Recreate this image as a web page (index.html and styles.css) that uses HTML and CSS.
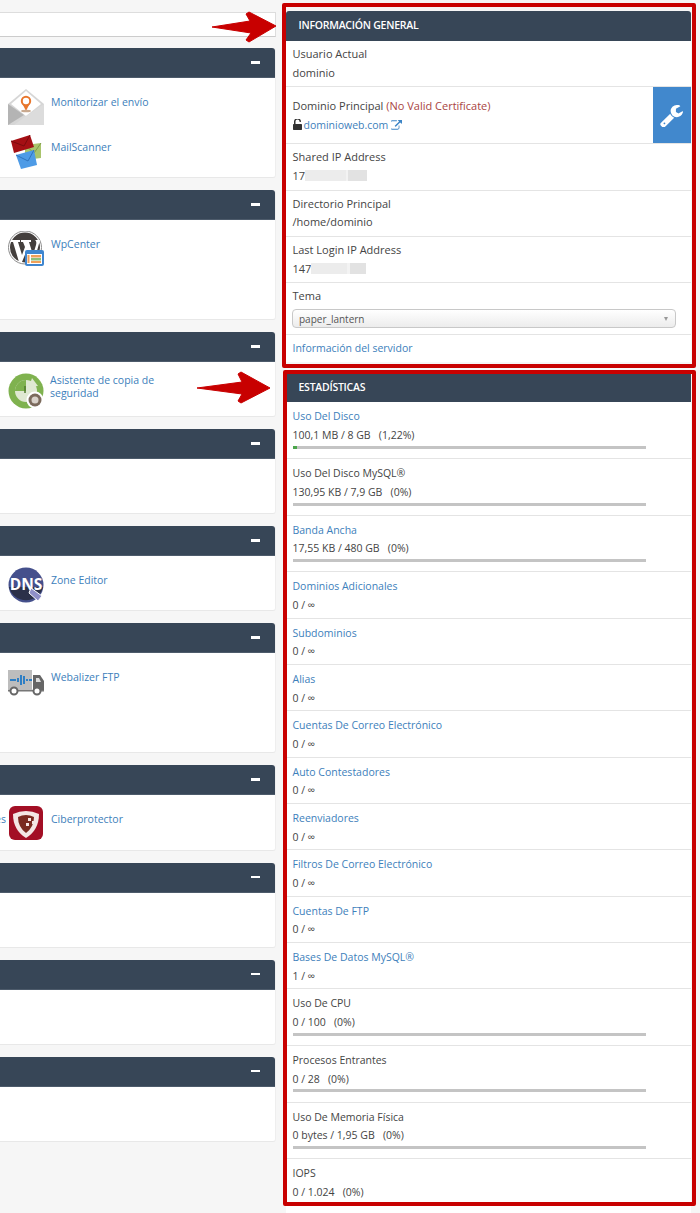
FILE: index.html
```html
<!DOCTYPE html>
<html lang="es">
<head>
  <meta charset="UTF-8">
  <meta name="viewport" content="width=device-width, initial-scale=1.0">
  <title>cPanel</title>
  <link rel="stylesheet" href="styles.css">
</head>
<body>
  <div class="page">
    <!-- Left column: tool groups -->
    <div class="tools">
      <div class="search-box"></div>

      <div class="group">
        <div class="group-head"><span class="collapse"></span></div>
        <div class="group-body size-big">
          <a class="tool">
            <svg class="tool-icon" viewBox="0 0 36 36">
              <path d="M18 0 36 15V36H0V15Z" fill="#d6d6d6"/>
              <path d="M18 2 33 15 18 27 3 15Z" fill="#fff"/>
              <path d="M0 15 16 26 0 36Z" fill="#b4b4b4"/>
              <path d="M36 15V36H6L18 27Z" fill="#dcdcdc"/>
              <circle cx="18" cy="12" r="4.2" fill="none" stroke="#e8762c" stroke-width="2"/>
              <path d="M15 16h6l-3 6Z" fill="#e8762c"/>
              <ellipse cx="18" cy="22" rx="5" ry="1.3" fill="#c9a98f"/>
            </svg>
            <span class="tool-name">Monitorizar el envío</span>
          </a>
          <a class="tool">
            <svg class="tool-icon" viewBox="0 0 36 36">
              <path d="M17 11 33 9V24L17 26Z" fill="#a9c46c"/>
              <path d="M17 11 26 19 33 9" fill="none" stroke="#7f9c49" stroke-width="1"/>
              <path d="M3 7 22 1 26 13 6 19Z" fill="#a50f14"/>
              <path d="M3 7 16 12 22 1" fill="none" stroke="#7c0a0d" stroke-width="1"/>
              <path d="M8 21 26 16 29 31 13 35Z" fill="#4e9be6"/>
              <path d="M8 21 20 27 26 16" fill="none" stroke="#2f74bd" stroke-width="1"/>
            </svg>
            <span class="tool-name">MailScanner</span>
          </a>
        </div>
      </div>

      <div class="group">
        <div class="group-head"><span class="collapse"></span></div>
        <div class="group-body size-big">
          <a class="tool">
            <svg class="tool-icon" viewBox="0 0 36 36">
              <circle cx="17" cy="16.5" r="16.5" fill="#fff" stroke="#8c8c8c" stroke-width="1"/>
              <circle cx="17" cy="16.5" r="15" fill="#443f3d"/>
              <path d="M3 9H12V11H10L14 24 17 16 15 11H13V9H23V11H21L25 24 28 14Q29 10 27 9H32L26 31H23L18.500 20 14 31H11L5 11H3Z" fill="#fff"/>
              <rect x="17" y="19" width="19" height="16" rx="2" fill="#3f86cf"/>
              <rect x="19" y="23" width="15" height="10" fill="#fff"/>
              <rect x="23" y="24" width="10" height="2.500" fill="#f0a05a"/>
              <rect x="23" y="27" width="10" height="2.500" fill="#8cc07c"/>
              <rect x="23" y="30" width="10" height="2" fill="#f0a05a"/>
              <rect x="19.500" y="24" width="2" height="8" fill="#f0a05a"/>
            </svg>
            <span class="tool-name">WpCenter</span>
          </a>
        </div>
      </div>

      <div class="group">
        <div class="group-head"><span class="collapse"></span></div>
        <div class="group-body size-small">
          <a class="tool tool-wide">
            <svg class="tool-icon" viewBox="0 0 36 36">
              <circle cx="18" cy="18" r="17.500" fill="#7fb24f"/>
              <circle cx="18" cy="18" r="11" fill="#dfe8d2"/>
              <path d="M18 18V7A11 11 0 0 0 7 18Z" fill="#7fb24f"/>
              <path d="M24 5 30 13 21 14Z" fill="#dfe8d2"/>
              <path d="M17 13V20" stroke="#4f7a2c" stroke-width="1.500"/>
              <circle cx="27" cy="27" r="8.500" fill="#fff"/>
              <circle cx="27" cy="27" r="6.500" fill="#7b6a5c"/>
              <circle cx="27" cy="27" r="3.500" fill="#d9d2ca"/>
            </svg>
            <span class="tool-name">Asistente de copia de seguridad</span>
          </a>
        </div>
      </div>

      <div class="group">
        <div class="group-head"><span class="collapse"></span></div>
        <div class="group-body size-small"></div>
      </div>

      <div class="group">
        <div class="group-head"><span class="collapse"></span></div>
        <div class="group-body size-small">
          <a class="tool">
            <svg class="tool-icon" viewBox="0 0 36 36">
              <circle cx="18" cy="18" r="17.500" fill="#45508c"/>
              <path d="M1 20H35A17.500 17.500 0 0 1 1 20Z" fill="#2b3049"/>
              <text class="dns-label" x="18" y="23">DNS</text>
              <path d="M23 21 34 29 30 34 21 26Z" fill="#8f8fc8" stroke="#fff" stroke-width="1"/>
            </svg>
            <span class="tool-name">Zone Editor</span>
          </a>
        </div>
      </div>

      <div class="group">
        <div class="group-head"><span class="collapse"></span></div>
        <div class="group-body size-big">
          <a class="tool">
            <svg class="tool-icon" viewBox="0 0 36 36">
              <rect x="0" y="6" width="24" height="20" fill="#bdbdbd"/>
              <path d="M2 16H8M10 14V18M13 11V21M16 12V20M19 15V17M21 16H24" stroke="#2f7fc4" stroke-width="2"/>
              <path d="M25 11H32L36 17V27H25Z" fill="#666"/>
              <path d="M28 14H31L33 18H28Z" fill="#ddd"/>
              <rect x="0" y="26" width="36" height="1.500" fill="#777"/>
              <circle cx="6" cy="27" r="3.500" fill="#fff" stroke="#666" stroke-width="2"/>
              <circle cx="29" cy="27" r="3.500" fill="#fff" stroke="#666" stroke-width="2"/>
            </svg>
            <span class="tool-name">Webalizer FTP</span>
          </a>
        </div>
      </div>

      <div class="group">
        <div class="group-head"><span class="collapse"></span></div>
        <div class="group-body size-small">
          <a class="tool tool-cut">
            <span class="cut-name">es</span>
            <svg class="tool-icon" viewBox="0 0 36 36">
              <rect x="1" y="0" width="34" height="34" rx="6" fill="#a30f25"/>
              <path d="M5 8Q18 2 31 8 31 24 18 32 5 24 5 8Z" fill="#f4e6e4"/>
              <path d="M10 11Q18 7 26 11 26 21 18 27 10 21 10 11Z" fill="#7a2a20"/>
              <rect x="20" y="12" width="3" height="3" fill="#f4e6e4"/>
              <rect x="24" y="15" width="3" height="3" fill="#f4e6e4"/>
              <rect x="18" y="17" width="3" height="3" fill="#f4e6e4"/>
            </svg>
            <span class="tool-name">Ciberprotector</span>
          </a>
        </div>
      </div>

      <div class="group">
        <div class="group-head"><span class="collapse"></span></div>
        <div class="group-body size-small"></div>
      </div>

      <div class="group">
        <div class="group-head"><span class="collapse"></span></div>
        <div class="group-body size-small"></div>
      </div>

      <div class="group">
        <div class="group-head"><span class="collapse"></span></div>
        <div class="group-body size-small"></div>
      </div>
    </div>

    <!-- Right column: account info and stats -->
    <div class="sidebar">
      <div class="panel panel-general">
        <div class="panel-head">INFORMACIÓN GENERAL</div>
        <div class="row">
          <div class="label">Usuario Actual</div>
          <div class="value">dominio</div>
        </div>
        <div class="row row-domain">
          <div class="domain-text">
            <div class="label">Dominio Principal <span class="warn">(No Valid Certificate)</span></div>
            <div class="value domain-value">
              <svg class="lock-icon" viewBox="320 128 1152 1408"><path fill="#333" d="M1376 768q40 0 68 28t28 68v576q0 40-28 68t-68 28h-960q-40 0-68-28t-28-68v-576q0-40 28-68t68-28h32v-320q0-185 131.5-316.5t316.5-131.5 316.5 131.5 131.5 316.5q0 26-19 45t-45 19h-64q-26 0-45-19t-19-45q0-106-75-181t-181-75-181 75-75 181v320h736z"/></svg>
              <a class="link">dominioweb.com</a>
              <svg class="ext-icon" viewBox="128 128 1664 1408"><path fill="#3d85c6" d="M1408 928v320q0 119-84.5 203.5t-203.5 84.5h-832q-119 0-203.5-84.5t-84.5-203.5v-832q0-119 84.5-203.5t203.5-84.5h704q14 0 23 9t9 23v64q0 14-9 23t-23 9h-704q-66 0-113 47t-47 113v832q0 66 47 113t113 47h832q66 0 113-47t47-113v-320q0-14 9-23t23-9h64q14 0 23 9t9 23zm384-864v512q0 26-19 45t-45 19-45-19l-176-176-652 652q-10 10-23 10t-23-10l-114-114q-10-10-10-23t10-23l652-652-176-176q-19-19-19-45t19-45 45-19h512q26 0 45 19t19 45z"/></svg>
            </div>
          </div>
          <a class="tool-btn">
            <svg class="wrench" viewBox="64 64 1664 1664"><path fill="#fff" d="M448 1472q0-26-19-45t-45-19-45 19-19 45 19 45 45 19 45-19 19-45zm644-420l-682 682q-37 37-90 37-52 0-91-37l-106-108q-38-36-38-90 0-53 38-91l681-681q39 98 114.5 173.5t173.5 114.5zm634-435q0 39-23 106-47 134-164.5 217.5t-258.5 83.5q-185 0-316.5-131.5t-131.5-316.5 131.5-316.5 316.5-131.5q58 0 121.5 16.5t107.5 46.5q16 11 16 28t-16 28l-293 169v224l193 107q5-3 79-48.5t135.5-81 70.5-35.5q15 0 23.5 10t8.5 25z"/></svg>
          </a>
        </div>
        <div class="row">
          <div class="label">Shared IP Address</div>
          <div class="value">17<span class="redacted redacted-long"></span></div>
        </div>
        <div class="row">
          <div class="label">Directorio Principal</div>
          <div class="value">/home/dominio</div>
        </div>
        <div class="row">
          <div class="label">Last Login IP Address</div>
          <div class="value">147<span class="redacted"></span></div>
        </div>
        <div class="row row-theme">
          <div class="label">Tema</div>
          <div class="select-wrap">
            <select class="theme-select">
              <option>paper_lantern</option>
            </select>
          </div>
        </div>
        <div class="row row-last">
          <a class="link">Información del servidor</a>
        </div>
      </div>

      <div class="panel panel-stats">
        <div class="panel-head head-stats">ESTADÍSTICAS</div>
        <div class="row">
          <a class="label link">Uso Del Disco</a>
          <div class="value">100,1 MB / 8 GB &nbsp; (1,22%)</div>
          <div class="bar"><div class="bar-fill" style="width: 1.22%"></div></div>
        </div>
        <div class="row">
          <div class="label">Uso Del Disco MySQL®</div>
          <div class="value">130,95 KB / 7,9 GB &nbsp; (0%)</div>
          <div class="bar"></div>
        </div>
        <div class="row">
          <a class="label link">Banda Ancha</a>
          <div class="value">17,55 KB / 480 GB &nbsp; (0%)</div>
          <div class="bar"></div>
        </div>
        <div class="row">
          <a class="label link">Dominios Adicionales</a>
          <div class="value">0 / ∞</div>
        </div>
        <div class="row">
          <a class="label link">Subdominios</a>
          <div class="value">0 / ∞</div>
        </div>
        <div class="row">
          <a class="label link">Alias</a>
          <div class="value">0 / ∞</div>
        </div>
        <div class="row">
          <a class="label link">Cuentas De Correo Electrónico</a>
          <div class="value">0 / ∞</div>
        </div>
        <div class="row">
          <a class="label link">Auto Contestadores</a>
          <div class="value">0 / ∞</div>
        </div>
        <div class="row">
          <a class="label link">Reenviadores</a>
          <div class="value">0 / ∞</div>
        </div>
        <div class="row">
          <a class="label link">Filtros De Correo Electrónico</a>
          <div class="value">0 / ∞</div>
        </div>
        <div class="row">
          <a class="label link">Cuentas De FTP</a>
          <div class="value">0 / ∞</div>
        </div>
        <div class="row">
          <a class="label link">Bases De Datos MySQL®</a>
          <div class="value">1 / ∞</div>
        </div>
        <div class="row">
          <div class="label">Uso De CPU</div>
          <div class="value">0 / 100 &nbsp; (0%)</div>
          <div class="bar"></div>
        </div>
        <div class="row">
          <div class="label">Procesos Entrantes</div>
          <div class="value">0 / 28 &nbsp; (0%)</div>
          <div class="bar"></div>
        </div>
        <div class="row">
          <div class="label">Uso De Memoria Física</div>
          <div class="value">0 bytes / 1,95 GB &nbsp; (0%)</div>
          <div class="bar"></div>
        </div>
        <div class="row row-end">
          <div class="label">IOPS</div>
          <div class="value">0 / 1.024 &nbsp; (0%)</div>
        </div>
      </div>
    </div>

    <!-- Annotation arrows drawn over the screenshot -->
    <svg class="arrows" viewBox="0 0 700 1213">
      <path d="M212 27 250 21 246 14 249 12 276 26 249 42 246 40 251 33Z" fill="#c80000" stroke="#c80000" stroke-linejoin="round"/>
      <path d="M197 388 242 382 238 374 241 372 270 388 241 403 238 401 242 394Z" fill="#c80000" stroke="#c80000" stroke-linejoin="round"/>
    </svg>
  </div>
</body>
</html>
```

FILE: styles.css
```css
* {
  margin: 0;
  padding: 0;
  box-sizing: border-box;
}

html, body {
  height: 1213px;
  overflow: hidden;
}

body {
  font-family: "Open Sans", Arial, sans-serif;
  font-size: 11px;
  color: #444;
  background-color: #f6f6f6;
}

.page {
  display: flex;
  gap: 10px;
  position: relative;
  height: 1213px;
}

.link {
  color: #3d80bb;
  font-size: 10.5px;
}

/* Left column */
.tools {
  width: 275.5px;
  padding-top: 12px;
  display: flex;
  flex-direction: column;
  gap: 12px;
  font-size: 10.5px;
}

.search-box {
  height: 24.5px;
  margin-bottom: -0.5px;
  background-color: #fff;
  border: 1px solid #ddd;
  border-left: none;
  border-bottom-color: #ccc;
}

.group {
  background-color: #fff;
  border-right: 1px solid #eee;
  border-bottom: 1px solid #e8e8e8;
  border-radius: 0 3px 3px 0;
}

.group-head {
  height: 30px;
  background-color: #374657;
  border-bottom: 1px solid #4d5b6b;
  border-radius: 0 3px 0 0;
  position: relative;
}

.collapse {
  position: absolute;
  right: 15px;
  top: 13px;
  width: 9px;
  height: 2.5px;
  background-color: #fff;
}

.group-body {
  padding-top: 10.5px;
}

.size-big {
  height: 99px;
}

.size-small {
  height: 54.15px;
}

.tool {
  display: flex;
  align-items: flex-start;
  gap: 7px;
  padding-left: 8px;
  height: 45px;
  color: #3d80bb;
}

.tool-icon {
  width: 36px;
  height: 36px;
  flex-shrink: 0;
}

.tool-name {
  padding-top: 6.5px;
  line-height: 14px;
}

.tool-wide {
  width: 180px;
  gap: 6px;
}

.tool-wide .tool-name {
  padding-top: 1px;
  line-height: 13.5px;
}

.tool-cut {
  padding-left: 0;
  gap: 0;
}

.tool-cut .tool-name {
  margin-left: 7px;
}

.cut-name {
  width: 8px;
  padding: 6.5px 2px 0 0;
  line-height: 14px;
  direction: rtl;
  overflow: hidden;
}

.dns-label {
  font-family: "Open Sans", Arial, sans-serif;
  font-size: 15.5px;
  font-weight: 700;
  fill: #fff;
  text-anchor: middle;
}

/* Right column */
.sidebar {
  width: 405px;
  padding-top: 11px;
}

.panel {
  background-color: #fff;
  position: relative;
}

.panel-general {
  margin-bottom: 12.5px;
}

.panel-general::after,
.panel-stats::after {
  content: "";
  position: absolute;
  border: 4px solid #c80000;
  border-radius: 2px;
  pointer-events: none;
}

.panel-general::after {
  top: -8px;
  left: -3.5px;
  right: -5px;
  bottom: -6px;
}

.panel-stats::after {
  top: -4.4px;
  left: -3px;
  right: -5px;
  bottom: 7.3px;
}

.panel-stats {
  font-size: 10.5px;
}

.panel-head {
  height: 30px;
  line-height: 29px;
  padding-left: 13px;
  color: #fff;
  font-size: 10.5px;
  font-weight: 600;
  letter-spacing: -0.25px;
  background-color: #374657;
  border-radius: 3px 3px 0 0;
}

.head-stats {
  height: 28px;
  line-height: 26px;
  border-radius: 0;
}

.row {
  padding: 4px 7px;
  border-bottom: 1px solid #e4e4e4;
}

.panel-stats .row {
  padding: 5px 7px 3px;
}

.label,
.value {
  display: block;
  line-height: 18.65px;
}

.label {
  color: #444;
}

a.label {
  color: #3d80bb;
}

.warn {
  color: #a94442;
}

.row-domain {
  display: flex;
  justify-content: space-between;
  padding: 0 0 0 7px;
}

.domain-text {
  padding: 9.7px 0 9px;
}

.domain-value {
  display: flex;
  align-items: center;
  gap: 2px;
}

.lock-icon {
  width: 9px;
  height: 11px;
}

.ext-icon {
  width: 11px;
  height: 10px;
  margin-left: 1px;
}

.tool-btn {
  width: 37.5px;
  background-color: #4188cd;
  display: flex;
  align-items: center;
  justify-content: center;
}

.wrench {
  width: 23px;
  height: 23px;
}

.redacted {
  display: inline-block;
  width: 55px;
  height: 11px;
  vertical-align: -1px;
  background: linear-gradient(to right, #ececec 0, #ececec 66%, #f3f3f3 66%, #f3f3f3 70%, #e2e2e2 70%, #e2e2e2 100%);
}

.redacted-long {
  width: 62px;
}

.row-theme {
  padding-bottom: 6px;
}

.select-wrap {
  position: relative;
  width: 383.5px;
  margin: 3.5px 0 0 -0.5px;
}

.select-wrap::after {
  content: "";
  position: absolute;
  right: 8px;
  top: 8px;
  border-left: 2.5px solid transparent;
  border-right: 2.5px solid transparent;
  border-top: 4px solid #999;
}

.theme-select {
  display: block;
  width: 100%;
  height: 18.5px;
  padding-left: 6px;
  font-family: "Open Sans", Arial, sans-serif;
  font-size: 10px;
  color: #555;
  border: 1px solid #c8c8c8;
  border-radius: 4px;
  background: linear-gradient(to bottom, #fff, #ececec);
  appearance: none;
}

.row-last {
  height: 27px;
  line-height: 18.65px;
  border-bottom: none;
}

.bar {
  width: 353px;
  height: 3px;
  margin: 1.2px 0 6.2px;
  background-color: #c4c4c4;
}

.bar-fill {
  height: 3px;
  background-color: #4ca64c;
}

.panel-stats .row-end {
  border-bottom: none;
  padding-bottom: 12px;
}

.arrows {
  position: absolute;
  left: 0;
  top: 0;
  width: 700px;
  height: 1213px;
  pointer-events: none;
}
```
